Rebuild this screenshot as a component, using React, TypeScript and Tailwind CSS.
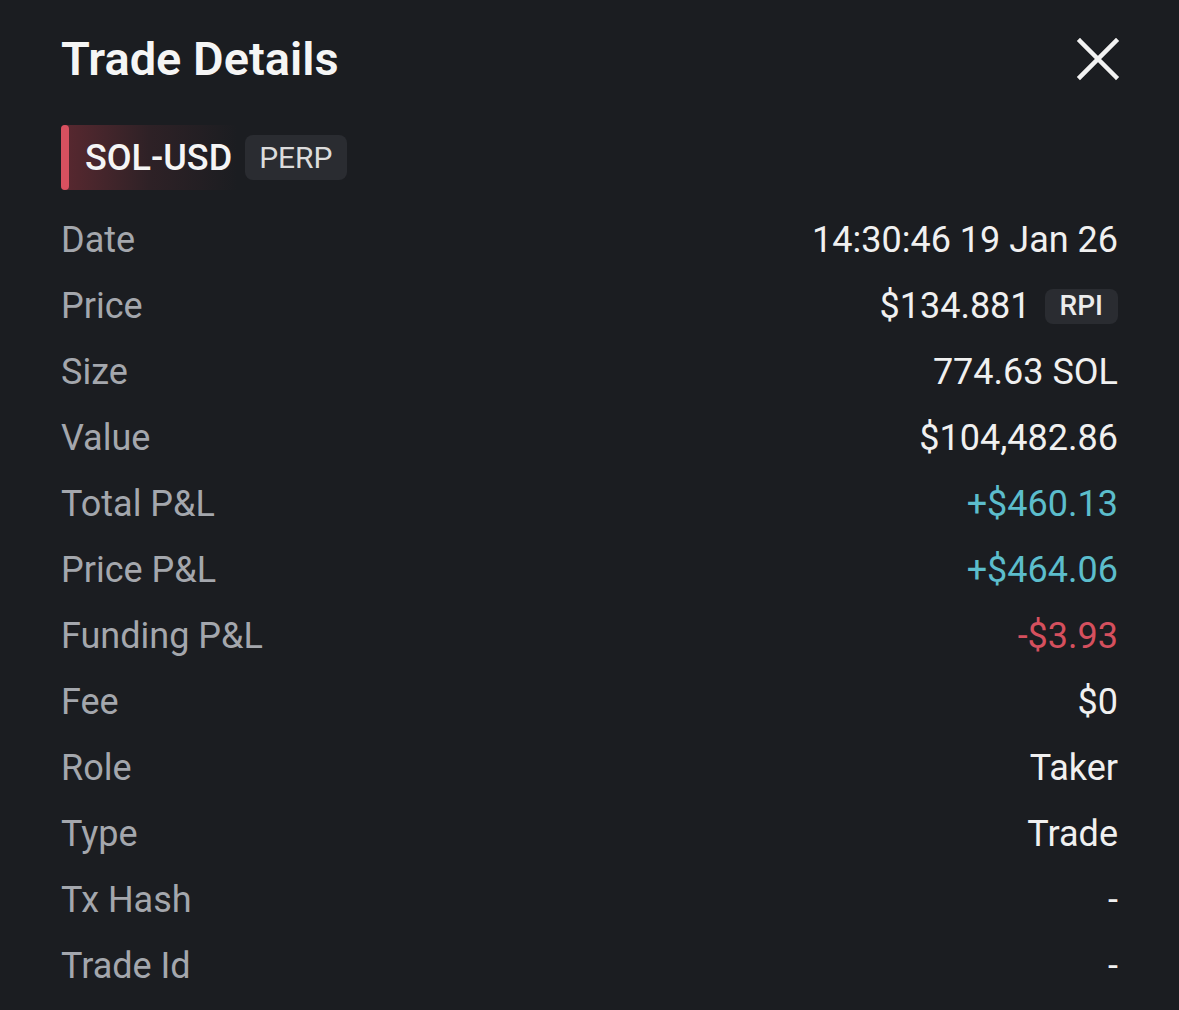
import React from "react";

const rows: { label: string; value: React.ReactNode; color?: string }[] = [
  { label: "Date", value: "14:30:46 19 Jan 26" },
  {
    label: "Price",
    value: (
      <span className="flex items-center gap-[14px]">
        <span>$134.881</span>
        <span className="rounded-[8px] bg-[#2a2c31] px-[15px] h-[35px] flex items-center text-[28px] font-medium text-[#ececec]">RPI</span>
      </span>
    ),
  },
  { label: "Size", value: "774.63 SOL" },
  { label: "Value", value: "$104,482.86" },
  { label: "Total P&L", value: "+$460.13", color: "text-[#5cbdcc]" },
  { label: "Price P&L", value: "+$464.06", color: "text-[#5cbdcc]" },
  { label: "Funding P&L", value: "-$3.93", color: "text-[#d5505e]" },
  { label: "Fee", value: "$0" },
  { label: "Role", value: "Taker" },
  { label: "Type", value: "Trade" },
  { label: "Tx Hash", value: "-" },
  { label: "Trade Id", value: "-" },
];

export default function App() {
  return (
    <div
      className="w-[1179px] h-[1010px] bg-[#1b1d21] overflow-hidden px-[61px] pt-[28px]"
      style={{ fontFamily: "Roboto, 'Noto Sans', sans-serif" }}
    >
      <div className="flex items-center justify-between h-[62px]">
        <h1 className="text-[47px] font-semibold text-[#f5f5f5]">Trade Details</h1>
        <svg width="44" height="44" viewBox="0 0 44 44" className="mr-[-2px]">
          <path d="M4 4 L40 40 M40 4 L4 40" stroke="#f2f2f2" strokeWidth="4.5" strokeLinecap="square" />
        </svg>
      </div>
      <div className="mt-[35px] flex items-center gap-[8px]">
        <div className="relative h-[65px] flex items-center pl-[24px] pr-[5px] rounded-l-[4px] bg-gradient-to-r from-[#5a2830] via-[#2e2126] to-[#1b1d21]">
          <div className="absolute left-0 top-0 bottom-0 w-[8px] rounded-[4px] bg-[#d8505f]" />
          <span className="text-[36px] font-medium text-[#f5f5f5]">SOL-USD</span>
        </div>
        <span className="rounded-[8px] bg-[#2a2c31] h-[45px] px-[14px] flex items-center text-[30px] text-[#dcdcdc]">PERP</span>
      </div>
      <div className="mt-[17px] flex flex-col">
        {rows.map((r) => (
          <div key={r.label} className="flex items-center justify-between h-[66px] text-[36px]">
            <span className="text-[#a4a7ad]">{r.label}</span>
            <span className={r.color ?? "text-[#f0f0f0]"}>{r.value}</span>
          </div>
        ))}
      </div>
    </div>
  );
}
